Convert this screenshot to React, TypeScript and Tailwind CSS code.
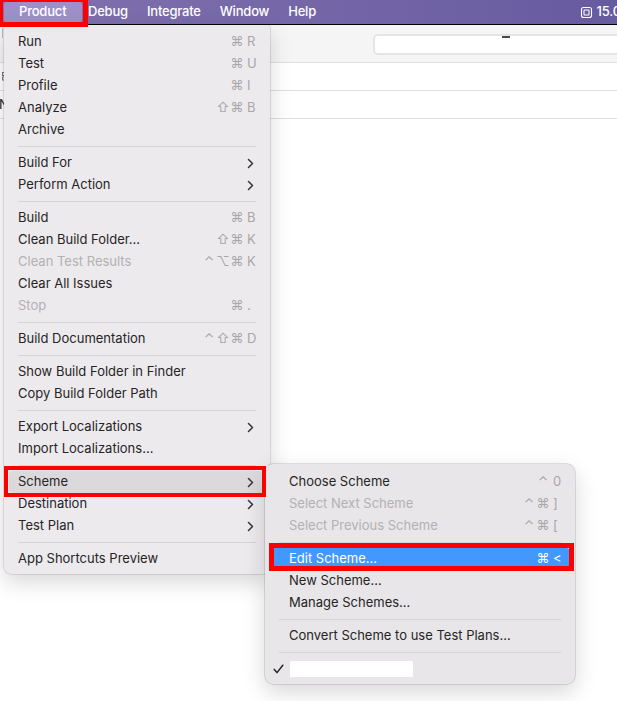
import React from 'react';

type Item =
  | { sep: true }
  | {
      sep?: false;
      label: string;
      mods?: string[];
      k?: string;
      sub?: boolean;
      off?: boolean;
      sel?: 'gray' | 'blue';
    };

const mainItems: Item[] = [
  { label: 'Run', mods: ['⌘'], k: 'R' },
  { label: 'Test', mods: ['⌘'], k: 'U' },
  { label: 'Profile', mods: ['⌘'], k: 'I' },
  { label: 'Analyze', mods: ['⇧', '⌘'], k: 'B' },
  { label: 'Archive' },
  { sep: true },
  { label: 'Build For', sub: true },
  { label: 'Perform Action', sub: true },
  { sep: true },
  { label: 'Build', mods: ['⌘'], k: 'B' },
  { label: 'Clean Build Folder…', mods: ['⇧', '⌘'], k: 'K' },
  { label: 'Clean Test Results', mods: ['⌃', '⌥', '⌘'], k: 'K', off: true },
  { label: 'Clear All Issues' },
  { label: 'Stop', mods: ['⌘'], k: '.', off: true },
  { sep: true },
  { label: 'Build Documentation', mods: ['⌃', '⇧', '⌘'], k: 'D' },
  { sep: true },
  { label: 'Show Build Folder in Finder' },
  { label: 'Copy Build Folder Path' },
  { sep: true },
  { label: 'Export Localizations', sub: true },
  { label: 'Import Localizations…' },
  { sep: true },
  { label: 'Scheme', sub: true, sel: 'gray' },
  { label: 'Destination', sub: true },
  { label: 'Test Plan', sub: true },
  { sep: true },
  { label: 'App Shortcuts Preview' },
];

const schemeItems: Item[] = [
  { label: 'Choose Scheme', mods: ['⌃'], k: '0' },
  { label: 'Select Next Scheme', mods: ['⌃', '⌘'], k: ']', off: true },
  { label: 'Select Previous Scheme', mods: ['⌃', '⌘'], k: '[', off: true },
  { sep: true },
  { label: 'Edit Scheme…', mods: ['⌘'], k: '<', sel: 'blue' },
  { label: 'New Scheme…' },
  { label: 'Manage Schemes…' },
  { sep: true },
  { label: 'Convert Scheme to use Test Plans…' },
  { sep: true },
];

function Chevron() {
  return (
    <span className="w-[9px] flex items-center">
      <svg width="7" height="11" viewBox="0 0 7 11" fill="none">
        <path d="M1.5 1.5 L5.5 5.5 L1.5 9.5" stroke="#3a393a" strokeWidth="1.6" strokeLinecap="round" strokeLinejoin="round" />
      </svg>
    </span>
  );
}

function Keys({ mods = [], k, color }: { mods?: string[]; k?: string; color: string }) {
  return (
    <span className={`flex items-center text-[13px] ${color}`}>
      {mods.map((m, i) => (
        <span key={i} className="w-[14px] text-center">
          {m}
        </span>
      ))}
      <span className="ml-[3px] w-[9px]">{k}</span>
    </span>
  );
}

function Row({ item, sub }: { item: Item; sub?: boolean }) {
  if (item.sep) {
    return (
      <div className="h-[11px] flex items-center mx-[14px]">
        <div className="h-px w-full bg-[#d6d3d6]" />
      </div>
    );
  }
  const blue = item.sel === 'blue';
  const bg = blue ? 'bg-[#4398fd]' : item.sel === 'gray' ? 'bg-[#dcd9dc]' : '';
  const text = blue ? 'text-white' : item.off ? 'text-[#b3b1b3]' : 'text-[#262526]';
  const keyColor = blue ? 'text-white' : 'text-[#a8a6a8]';
  return (
    <div
      className={`mx-[5px] h-[22px] flex items-center justify-between rounded-[4px] ${
        sub ? 'pl-[19px] pr-[8px]' : 'pl-[9px] pr-[9px]'
      } ${bg}`}
    >
      <span className={`text-[13px] ${text}`}>{item.label}</span>
      {item.sub ? <Chevron /> : item.k ? <Keys mods={item.mods} k={item.k} color={keyColor} /> : null}
    </div>
  );
}

function ChipIcon() {
  return (
    <svg width="13" height="13" viewBox="0 0 13 13" fill="none" stroke="white" strokeWidth="1.1">
      <rect x="1.5" y="1.5" width="10" height="10" rx="2" />
      <rect x="4" y="4" width="5" height="5" rx="0.7" />
    </svg>
  );
}

export default function App() {
  return (
    <div
      className="relative w-[617px] h-[701px] overflow-hidden bg-white"
      style={{ fontFamily: 'Inter, "DejaVu Sans", sans-serif' }}
    >
      {/* menu bar */}
      <div className="h-[25px] border-b border-black bg-gradient-to-r from-[#8271af] to-[#675b9f] flex items-center text-white text-[13px] font-medium tracking-[-0.2px]">
        <div className="ml-[4px] w-[78px] h-[22px] rounded-[4px] bg-[#9d90c8] pl-[15px] flex items-center">Product</div>
        <span className="ml-[6px]">Debug</span>
        <span className="ml-[19px]">Integrate</span>
        <span className="ml-[19px]">Window</span>
        <span className="ml-[19px]">Help</span>
        <div className="ml-auto flex items-center gap-[4px] pl-[4px] whitespace-nowrap -mr-[25px]">
          <ChipIcon />
          <span>15.0 GB</span>
        </div>
      </div>

      {/* window behind the menu */}
      <div className="h-[38px] bg-[#f6f5f6] border-b border-[#e2e0e2] flex items-center">
        <div className="ml-[2px] w-px h-[10px] bg-[#b9b7b9] self-start mt-[3px]" />
        <div className="ml-[370px] mt-[1px] h-[21px] flex-1 -mr-[10px] rounded-[5px] border-2 border-[#e6e4e6] bg-white relative">
          <div className="absolute left-[127px] top-0 w-[8px] h-[2px] bg-[#4a4a4a]" />
        </div>
      </div>
      <div className="h-[28px] border-b border-[#e2e0e2] flex items-center pl-[2px]">
        <svg width="6" height="9" viewBox="0 0 6 9" fill="none" stroke="#777" strokeWidth="1">
          <rect x="0.5" y="0.5" width="5" height="3" />
          <rect x="0.5" y="5" width="5" height="3" />
        </svg>
      </div>
      <div className="h-[28px] border-b border-[#e2e0e2] flex items-center text-[13px] text-[#222]">
        <span className="-ml-[1px]">N</span>
      </div>

      {/* Product menu */}
      <div className="absolute left-[4px] top-[25px] w-[266px] bg-[#edeaed] rounded-b-[7px] rounded-t-[3px] pt-[6px] pb-[4px] shadow-[0_0_0_0.5px_rgba(0,0,0,0.2),0_8px_22px_rgba(0,0,0,0.16)]">
        {mainItems.map((it, i) => (
          <Row key={i} item={it} />
        ))}
      </div>

      {/* Scheme submenu */}
      <div className="absolute left-[265px] top-[464px] w-[310px] bg-[#e8e6e8] rounded-[8px] pt-[7px] pb-[4px] shadow-[0_0_0_0.5px_rgba(0,0,0,0.22),0_8px_22px_rgba(0,0,0,0.16)]">
        {schemeItems.map((it, i) => (
          <Row key={i} item={it} sub />
        ))}
        <div className="mx-[5px] h-[22px] flex items-center pl-[3px]">
          <svg width="11" height="10" viewBox="0 0 11 10" fill="none">
            <path d="M1.2 5.4 L4 8.6 L9.8 1.2" stroke="#262526" strokeWidth="1.5" strokeLinecap="round" strokeLinejoin="round" />
          </svg>
          <div className="ml-[6px] w-[123px] h-[16px] bg-white" />
        </div>
      </div>

      {/* red annotation boxes */}
      <div className="absolute left-[-2px] top-[-3px] w-[90px] h-[30px] border-[5px] border-[#ff0000]" />
      <div className="absolute left-[4px] top-[466px] w-[262px] h-[31px] border-[4px] border-[#ff0000]" />
      <div className="absolute left-[269px] top-[543px] w-[305px] h-[28px] border-[5px] border-[#ff0000]" />
    </div>
  );
}
